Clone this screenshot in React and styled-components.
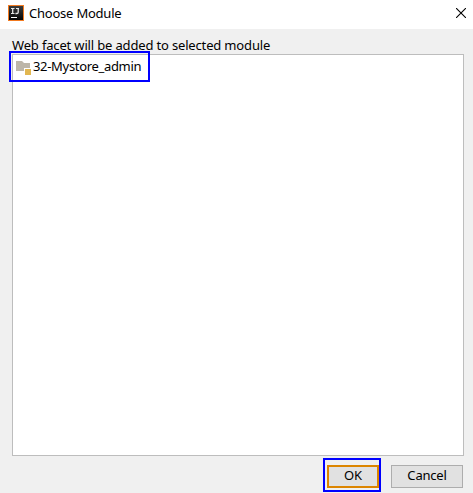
import React from "react";
import styled, { createGlobalStyle } from "styled-components";

const GlobalStyle = createGlobalStyle`
  * { box-sizing: border-box; }
  body { margin: 0; background: #f0f0f0; overflow: hidden; }
`;

const Dialog = styled.div`
  display: flex;
  flex-direction: column;
  width: 473px;
  height: 493px;
  background: #f0f0f0;
  color: #000;
  font: 13px/18px "Noto Sans", "Open Sans", sans-serif;
  white-space: nowrap;
`;

const TitleBar = styled.header`
  display: flex;
  align-items: flex-start;
  height: 29px;
  padding: 4px 7px 0 8px;
  background: #fff;
`;

const Text = styled.span`
  letter-spacing: ${(p) => p.$spacing || 0}px;
`;

const Title = styled(Text)`
  flex: 1;
  margin-left: 5px;
`;

const CloseButton = styled.button`
  display: flex;
  margin: 4px 0 0;
  padding: 0;
  border: 0;
  background: none;
`;

const Content = styled.main`
  flex: 1;
  display: flex;
  flex-direction: column;
  padding: 7px 9px 0 12px;
`;

const Label = styled(Text)`
  height: 18px;
`;

const ModuleList = styled.div`
  height: 402px;
  border: 1px solid #bdbdbd;
  background: #fff;
`;

const ModuleRow = styled.div`
  position: relative;
  display: flex;
  height: 24px;
  padding: 2px 0 0 3px;
`;

const ModuleName = styled(Text)`
  margin-left: 1px;
`;

const Highlight = styled.div`
  position: absolute;
  left: ${(p) => p.$left}px;
  top: ${(p) => p.$top}px;
  width: ${(p) => p.$width}px;
  height: ${(p) => p.$height}px;
  border: 2px solid #0000ff;
  pointer-events: none;
`;

const Footer = styled.footer`
  display: flex;
  justify-content: flex-end;
  gap: 12px;
  padding: 9px 1px 0 0;
`;

const ButtonSlot = styled.div`
  position: relative;
`;

const Button = styled.button`
  display: flex;
  align-items: center;
  justify-content: center;
  width: ${(p) => (p.$primary ? 52 : 72)}px;
  height: 23px;
  padding: 0 0 ${(p) => (p.$primary ? 3 : 3)}px;
  border: ${(p) => (p.$primary ? "2px solid #dc8500" : "1px solid #adadad")};
  background: #e1e1e1;
  color: #000;
  font: inherit;
`;

const Svg = styled.svg`
  display: block;
  flex: none;
  margin-top: 1px;
`;

function AppIcon() {
  return (
    <Svg width="16" height="16" viewBox="0 0 16 16" shapeRendering="crispEdges">
      <defs>
        <linearGradient id="tile" x1="0" y1="0" x2="0" y2="1">
          <stop offset="0" stopColor="#3b3b3b" />
          <stop offset="1" stopColor="#050505" />
        </linearGradient>
      </defs>
      <rect width="16" height="16" fill="#f27a20" />
      <rect x="1" y="1" width="14" height="14" fill="url(#tile)" />
      <g fill="none" stroke="#e6e6e6" shapeRendering="auto">
        <path d="M3 3.5h3.5M3 8.5h3.5M8 3.5h3" strokeWidth="1" />
        <path d="M4.7 3v6M10.2 3v4.2q0 1.3-1.4 1.3H7.4" strokeWidth="1.3" />
      </g>
      <rect x="3" y="12" width="6" height="1" fill="#fff" />
    </Svg>
  );
}

function FolderIcon() {
  return (
    <Svg width="16" height="17" viewBox="0 0 16 17">
      <path d="M0 3h6l2 2h6v5H8v3H0z" fill="#bdb6a9" />
      <rect x="9" y="11" width="6" height="6" fill="#e2b750" />
    </Svg>
  );
}

function CloseIcon() {
  return (
    <svg width="10" height="10" viewBox="0 0 10 10">
      <path d="M0 0l10 10M10 0L0 10" fill="none" stroke="#000" strokeWidth="1.1" />
    </svg>
  );
}

export default function App() {
  return (
    <>
      <GlobalStyle />
      <Dialog>
        <TitleBar>
          <AppIcon />
          <Title $spacing={-0.22}>Choose Module</Title>
          <CloseButton aria-label="Close">
            <CloseIcon />
          </CloseButton>
        </TitleBar>
        <Content>
          <Label $spacing={-0.16}>Web facet will be added to selected module</Label>
          <ModuleList>
            <ModuleRow>
              <FolderIcon />
              <ModuleName $spacing={-0.32}>32-Mystore_admin</ModuleName>
              <Highlight $left={-4} $top={-4} $width={141} $height={31} />
            </ModuleRow>
          </ModuleList>
          <Footer>
            <ButtonSlot>
              <Button $primary>
                <Text>OK</Text>
              </Button>
              <Highlight $left={-4} $top={-7} $width={58} $height={34} />
            </ButtonSlot>
            <Button>
              <Text $spacing={-0.2}>Cancel</Text>
            </Button>
          </Footer>
        </Content>
      </Dialog>
    </>
  );
}
